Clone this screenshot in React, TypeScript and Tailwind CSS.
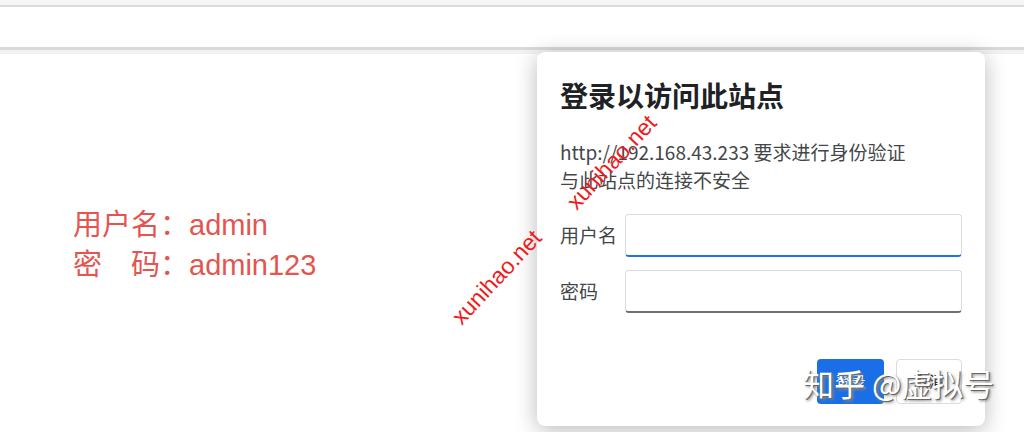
export default function App() {
  const cjk = { fontFamily: '"Noto Sans CJK SC", "Noto Sans", sans-serif' };
  const mixed = { fontFamily: '"Liberation Sans", "Noto Sans CJK SC", sans-serif' };

  return (
    <div className="relative h-[432px] w-[1024px] overflow-hidden bg-white">
      {/* browser chrome lines */}
      <div className="h-[5px] bg-[#f5f5f5]" />
      <div className="h-[2px] bg-[#dcdcdc]" />
      <div className="h-[40px] bg-white" />
      <div className="h-[3px] bg-[#d9d9d9]" />

      <div className="flex h-[382px] bg-[linear-gradient(#f2f2f2_0,#f2f2f2_4px,#ffffff_4px)]">
        {/* credentials note */}
        <div className="w-[537px] pl-[73px] pt-[155px] text-[29px] leading-[40px] text-[#e5554f]" style={mixed}>
          <div>用户名：admin</div>
          <div>密　码：admin123</div>
        </div>

        {/* auth dialog */}
        <div
          className="mt-[2px] flex h-[374px] w-[448px] flex-col rounded-[8px] bg-white px-[23px] pb-[22px] pt-[25px] shadow-[0_4px_22px_rgba(0,0,0,0.28)]"
          style={cjk}
        >
          <h1 className="text-[28px] font-bold leading-[36px] text-[#202124]">登录以访问此站点</h1>
          <div className="mt-[25px] text-[19px] leading-[28px] text-[#44474a]">
            <p>http://192.168.43.233 要求进行身份验证</p>
            <p>与此站点的连接不安全</p>
          </div>

          <div className="mt-[20px] flex flex-col gap-[13px]">
            <label className="flex items-center">
              <span className="w-[65px] text-[19px] text-[#44474a]">用户名</span>
              <input className="h-[43px] w-[337px] rounded-[4px] border border-b-2 border-[#dadce0] border-b-[#1a73e8] outline-none" />
            </label>
            <label className="flex items-center">
              <span className="w-[65px] text-[19px] text-[#44474a]">密码</span>
              <input type="password" className="h-[43px] w-[337px] rounded-[4px] border border-b-2 border-[#dadce0] border-b-[#6f6f6f] outline-none" />
            </label>
          </div>

          <div className="mt-auto flex justify-end gap-[12px]">
            <button className="h-[45px] w-[67px] rounded-[4px] bg-[#1a6fe6] text-[15px] text-white">登录</button>
            <button className="h-[45px] w-[66px] rounded-[4px] border border-[#dadce0] bg-white text-[15px] text-[#202124]">取消</button>
          </div>
        </div>
      </div>

      {/* watermarks */}
      <span
        className="absolute left-[552px] top-[148px] -rotate-[47deg] text-[23px] leading-[28px] text-[#ee1c1c]"
        style={{ fontFamily: '"Liberation Sans", sans-serif' }}
      >
        xunihao.net
      </span>
      <span
        className="absolute left-[437px] top-[263px] -rotate-[47deg] text-[23px] leading-[28px] text-[#ee1c1c]"
        style={{ fontFamily: '"Liberation Sans", sans-serif' }}
      >
        xunihao.net
      </span>
      <span
        className="absolute left-[803px] top-[363px] text-[31px] leading-[40px] text-white [text-shadow:1px_1px_0_#666,2px_2px_3px_#888]"
        style={cjk}
      >
        知乎 @虚拟号
      </span>
    </div>
  );
}
